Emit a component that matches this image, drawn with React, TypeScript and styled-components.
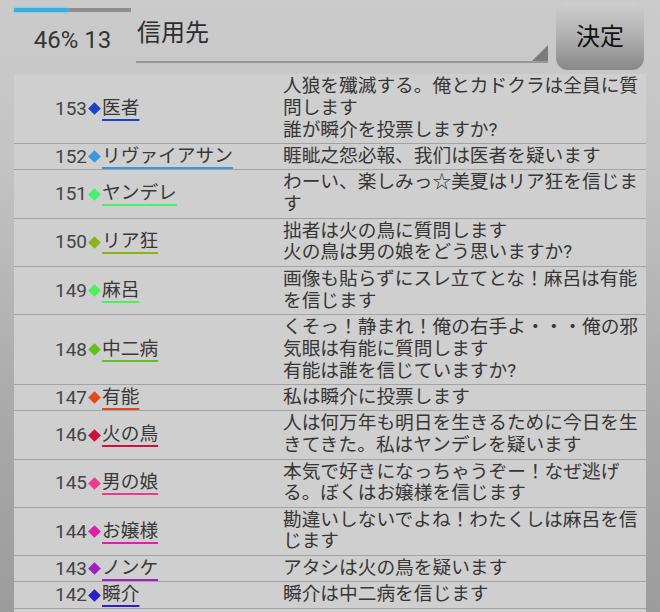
import React from 'react'
import styled, { createGlobalStyle } from 'styled-components'

const GlobalStyle = createGlobalStyle`
  html, body {
    margin: 0;
    padding: 0;
    height: 612px;
    overflow: hidden;
  }
  body {
    background: linear-gradient(180deg, #cbcbcb 0%, #c4c4c4 25%, #a8a8a8 70%, #9c9c9c 100%);
    font-family: Roboto, 'Noto Sans CJK JP', sans-serif;
    color: #3a3a3a;
  }
`

const Header = styled.div`
  display: flex;
  align-items: flex-start;
  height: 74px;
  padding-left: 14px;
  box-sizing: border-box;
`

const Status = styled.div`
  width: 117px;
  display: flex;
  flex-direction: column;
  align-items: center;
  padding-top: 8px;
`

const Progress = styled.div`
  width: 117px;
  height: 4px;
  background: #8e8e8e;
`

const ProgressFill = styled.div`
  height: 100%;
  background: #36aee0;
  box-shadow: 0 0 3px #5cc0ec;
`

const StatusText = styled.div`
  margin-top: 13px;
  font-size: 24px;
  line-height: 30px;
  color: #353535;
`

const Spinner = styled.div`
  position: relative;
  margin-left: 5px;
  width: 412px;
  height: 63px;
  box-sizing: border-box;
  border-bottom: 2px solid #989898;
  padding: 17px 0 0 1px;
  font-size: 24px;
  line-height: 32px;
  color: #2e2e2e;
`

const SpinnerArrow = styled.div`
  position: absolute;
  right: 0;
  bottom: 0;
  width: 16px;
  height: 16px;
  background: #7c7c7c;
  clip-path: polygon(100% 0, 100% 100%, 0 100%);
`

const DecideButton = styled.button`
  margin: 2px 0 0 8px;
  width: 88px;
  height: 68px;
  border: none;
  border-radius: 12px;
  background: linear-gradient(180deg, #cfcfcf 0%, #b4b4b4 45%, #888 100%);
  font-family: Roboto, 'Noto Sans CJK JP', sans-serif;
  font-size: 24px;
  color: #111;
  padding: 0 0 4px;
`

const Table = styled.div`
  margin: 0 14px;
  background: #cfcfcf;
  padding-bottom: 20px;
`

const Row = styled.div`
  display: grid;
  grid-template-columns: 269px 363px;
  border-bottom: 1px solid #a3a3a3;
  padding: 2px 0 1.6px;
  font-size: 18.7px;
  line-height: 21.8px;
`

const Who = styled.div`
  display: flex;
  align-items: center;
  padding-left: 41px;
  color: #444;
`

const Num = styled.span`
  font-size: 19px;
`

const Diamond = styled.span<{ $color: string }>`
  display: inline-block;
  width: 9px;
  height: 9px;
  margin: 0 3px 0 3px;
  background: ${({ $color }) => $color};
  transform: rotate(45deg);
`

const Name = styled.span<{ $color: string }>`
  color: #383838;
  text-decoration: underline;
  text-decoration-color: ${({ $color }) => $color};
  text-decoration-thickness: 2px;
  text-underline-offset: 5px;
  text-decoration-skip-ink: none;
`

const Message = styled.div`
  color: #363636;
`

type Entry = { n: number; name: string; color: string; lines: string[] }

const entries: Entry[] = [
  { n: 153, name: '医者', color: '#1f3fc6', lines: ['人狼を殲滅する。俺とカドクラは全員に質問します', '誰が瞬介を投票しますか?'] },
  { n: 152, name: 'リヴァイアサン', color: '#3797e0', lines: ['睚眦之怨必報、我们は医者を疑います'] },
  { n: 151, name: 'ヤンデレ', color: '#46f06e', lines: ['わーい、楽しみっ☆美夏はリア狂を信じます'] },
  { n: 150, name: 'リア狂', color: '#8ab41e', lines: ['拙者は火の鳥に質問します', '火の鳥は男の娘をどう思いますか?'] },
  { n: 149, name: '麻呂', color: '#4cf05e', lines: ['画像も貼らずにスレ立てとな！麻呂は有能を信じます'] },
  { n: 148, name: '中二病', color: '#62c01e', lines: ['くそっ！静まれ！俺の右手よ・・・俺の邪気眼は有能に質問します', '有能は誰を信じていますか?'] },
  { n: 147, name: '有能', color: '#e24a1e', lines: ['私は瞬介に投票します'] },
  { n: 146, name: '火の鳥', color: '#d0103c', lines: ['人は何万年も明日を生きるために今日を生きてきた。私はヤンデレを疑います'] },
  { n: 145, name: '男の娘', color: '#f2388c', lines: ['本気で好きになっちゃうぞー！なぜ逃げる。ぼくはお嬢様を信じます'] },
  { n: 144, name: 'お嬢様', color: '#e01ea6', lines: ['勘違いしないでよね！わたくしは麻呂を信じます'] },
  { n: 143, name: 'ノンケ', color: '#a41ec2', lines: ['アタシは火の鳥を疑います'] },
  { n: 142, name: '瞬介', color: '#2e1ec6', lines: ['瞬介は中二病を信じます'] },
]

const App: React.FC = () => {
  const progress = 46

  return (
    <>
      <GlobalStyle />
      <Header>
        <Status>
          <Progress>
            <ProgressFill style={{ width: `${progress}%` }} />
          </Progress>
          <StatusText>{progress}% 13</StatusText>
        </Status>
        <Spinner>
          信用先
          <SpinnerArrow />
        </Spinner>
        <DecideButton>決定</DecideButton>
      </Header>
      <Table>
        {entries.map((e) => (
          <Row key={e.n}>
            <Who>
              <Num>{e.n}</Num>
              <Diamond $color={e.color} />
              <Name $color={e.color}>{e.name}</Name>
            </Who>
            <Message>
              {e.lines.map((l, i) => (
                <div key={i}>{l}</div>
              ))}
            </Message>
          </Row>
        ))}
      </Table>
    </>
  )
}

export default App
